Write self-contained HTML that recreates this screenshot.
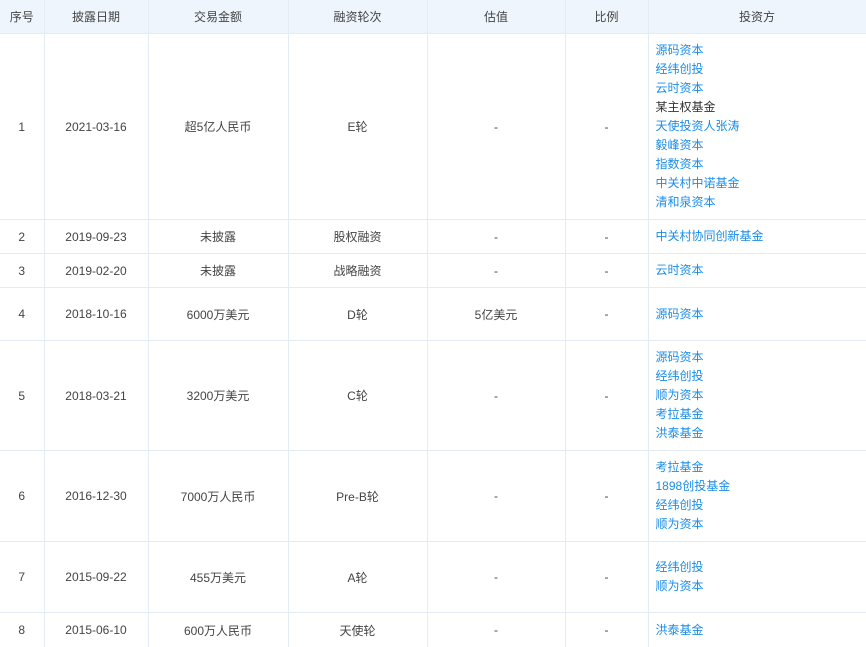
<!DOCTYPE html>
<html><head><meta charset="utf-8"><style>
html,body{margin:0;padding:0;background:#fff;width:866px;height:647px;overflow:hidden}
table{border-collapse:collapse;table-layout:fixed;width:866px;font-family:"Liberation Sans","Noto Sans CJK SC",sans-serif;font-size:12px;color:#444}
td,th{border:1px solid #e3ebf4;text-align:center;vertical-align:middle;padding:0;white-space:nowrap}
th{background:#eef5fc;font-weight:normal;color:#444;height:33px}
tr:first-child th{border-top:none}
td:first-child,th:first-child{border-left:none}
td.inv{text-align:left;padding-left:7px;line-height:19px;color:#1a8ce8}
td.inv span.k{color:#333}
</style></head><body>
<table>
<colgroup><col style="width:44px"><col style="width:104px"><col style="width:140px"><col style="width:139px"><col style="width:138px"><col style="width:83px"><col style="width:218px"></colgroup>
<tr><th>序号</th><th>披露日期</th><th>交易金额</th><th>融资轮次</th><th>估值</th><th>比例</th><th>投资方</th></tr>
<tr style="height:186px"><td>1</td><td>2021-03-16</td><td>超5亿人民币</td><td>E轮</td><td>-</td><td>-</td><td class="inv">源码资本<br>经纬创投<br>云时资本<br><span class="k">某主权基金</span><br>天使投资人张涛<br>毅峰资本<br>指数资本<br>中关村中诺基金<br>清和泉资本</td></tr>
<tr style="height:34px"><td>2</td><td>2019-09-23</td><td>未披露</td><td>股权融资</td><td>-</td><td>-</td><td class="inv">中关村协同创新基金</td></tr>
<tr style="height:34px"><td>3</td><td>2019-02-20</td><td>未披露</td><td>战略融资</td><td>-</td><td>-</td><td class="inv">云时资本</td></tr>
<tr style="height:53px"><td>4</td><td>2018-10-16</td><td>6000万美元</td><td>D轮</td><td>5亿美元</td><td>-</td><td class="inv">源码资本</td></tr>
<tr style="height:110px"><td>5</td><td>2018-03-21</td><td>3200万美元</td><td>C轮</td><td>-</td><td>-</td><td class="inv">源码资本<br>经纬创投<br>顺为资本<br>考拉基金<br>洪泰基金</td></tr>
<tr style="height:91px"><td>6</td><td>2016-12-30</td><td>7000万人民币</td><td>Pre-B轮</td><td>-</td><td>-</td><td class="inv">考拉基金<br>1898创投基金<br>经纬创投<br>顺为资本</td></tr>
<tr style="height:71px"><td>7</td><td>2015-09-22</td><td>455万美元</td><td>A轮</td><td>-</td><td>-</td><td class="inv">经纬创投<br>顺为资本</td></tr>
<tr style="height:35px"><td>8</td><td>2015-06-10</td><td>600万人民币</td><td>天使轮</td><td>-</td><td>-</td><td class="inv">洪泰基金</td></tr>
</table>
</body></html>
